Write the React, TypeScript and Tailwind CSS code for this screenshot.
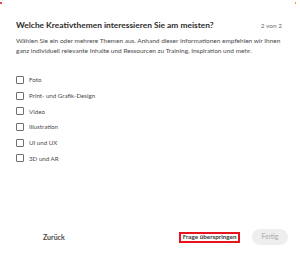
import React from "react";

const items = ["Foto", "Print- und Grafik-Design", "Video", "Illustration", "UI und UX", "3D und AR"];

export default function App() {
  return (
    <div className="w-[300px] h-[265px] bg-white relative overflow-hidden" style={{ fontFamily: 'Lato, "Liberation Sans", sans-serif' }}>
      <div className="absolute left-0 top-[2px] w-[2px] h-[2px] bg-[#e34850]" />
      <div className="absolute right-[4px] top-[2px] w-[1px] h-[2px] bg-[#f0a020]" />
      <div className="flex flex-col px-[16px] pt-[19px] h-full">
        <div className="flex items-baseline justify-between whitespace-nowrap">
          <div className="text-[8.4px] font-bold text-[#2c2c2c] leading-[12px]">Welche Kreativthemen interessieren Sie am meisten?</div>
          <div className="text-[6.5px] text-[#6e6e6e] mr-[2px]">2 von 2</div>
        </div>
        <div className="mt-[5px] text-[6.5px] leading-[10px] text-[#4b4b4b] whitespace-nowrap">
          Wählen Sie ein oder mehrere Themen aus. Anhand dieser Informationen empfehlen wir Ihnen<br />
          ganz individuell relevante Inhalte und Ressourcen zu Training, Inspiration und mehr.
        </div>
        <div className="mt-[20px] flex flex-col gap-[7.7px]">
          {items.map((t) => (
            <div key={t} className="flex items-center h-[8px]">
              <div className="w-[8px] h-[8px] border border-[#6e6e6e] rounded-[1px]" />
              <span className="ml-[5px] text-[6.2px] text-[#4b4b4b]">{t}</span>
            </div>
          ))}
        </div>
        <div className="mt-auto mb-[20px] flex items-center -mr-[4px]">
          <span className="ml-[27px] text-[7px] font-bold text-[#4b4b4b]">Zurück</span>
          <div className="ml-auto border-2 border-[#e8141c] px-[1.5px] h-[11px] flex items-center">
            <span className="text-[6.3px] font-bold text-[#3a3a3a] leading-none">Frage überspringen</span>
          </div>
          <div className="ml-[12px] w-[36px] h-[16px] rounded-full bg-[#eeeeee] flex items-center justify-center">
            <span className="text-[6.5px] font-bold text-[#b8b8b8]">Fertig</span>
          </div>
        </div>
      </div>
    </div>
  );
}
